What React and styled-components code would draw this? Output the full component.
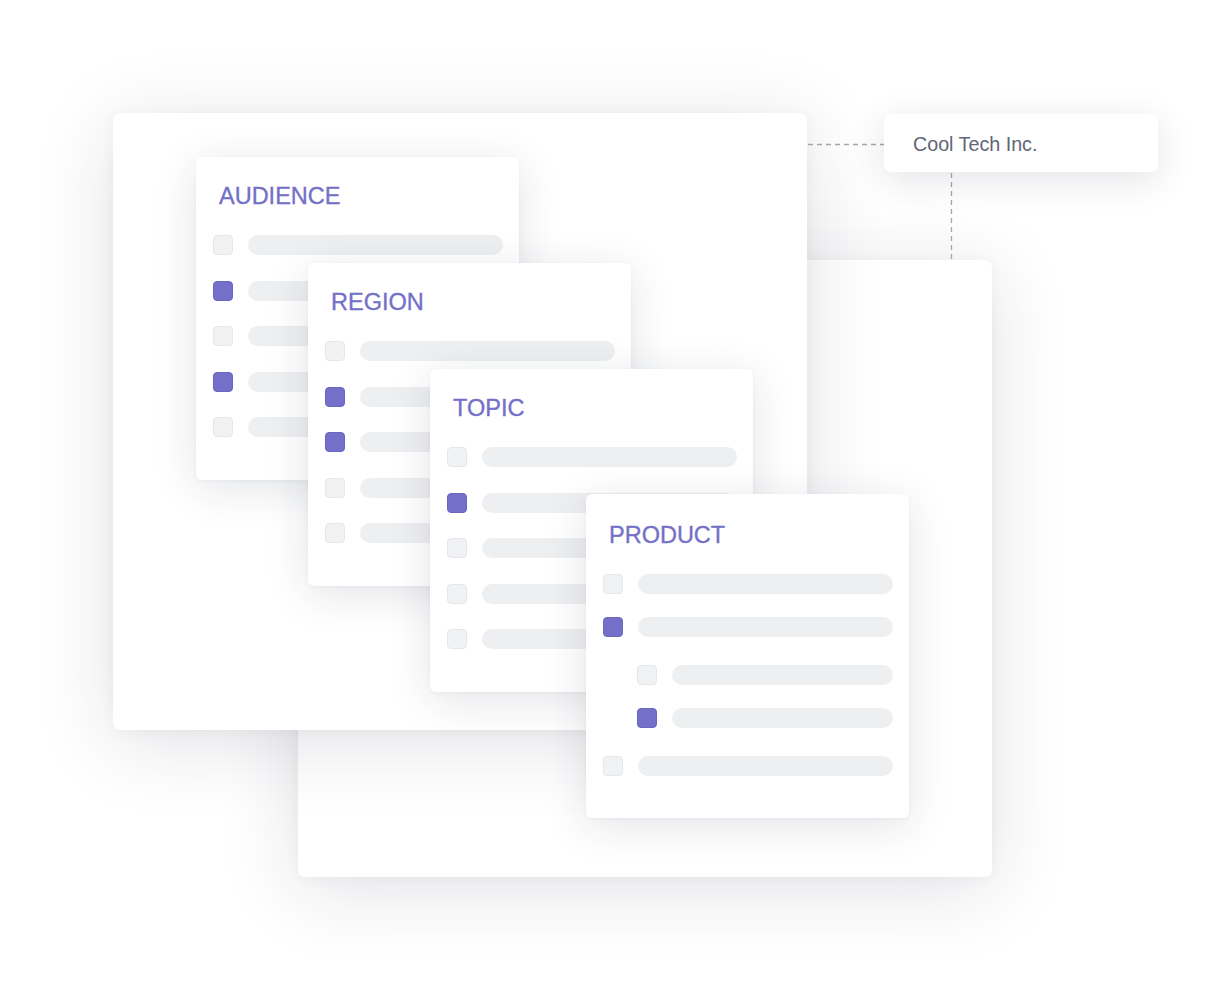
import React from 'react';
import styled, { createGlobalStyle } from 'styled-components';

const GlobalStyle = createGlobalStyle`
  html, body {
    margin: 0;
    padding: 0;
    background: #ffffff;
  }
  body {
    font-family: 'Liberation Sans', Arial, sans-serif;
  }
`;

const filters = [
  {
    title: 'AUDIENCE',
    left: 196,
    top: 157,
    rows: [{}, { checked: true }, {}, { checked: true }, {}],
  },
  {
    title: 'REGION',
    left: 308,
    top: 263,
    rows: [{}, { checked: true }, { checked: true }, {}, {}],
  },
  {
    title: 'TOPIC',
    left: 430,
    top: 369,
    rows: [{}, { checked: true }, {}, {}, {}],
  },
  {
    title: 'PRODUCT',
    left: 586,
    top: 494,
    tight: true,
    rows: [{}, { checked: true }, { sub: true }, { sub: true, checked: true }, {}],
  },
];

const App = () => {
  return (
    <>
      <GlobalStyle />
      <Canvas>
        <Panel left={298} top={260} />
        <Panel left={113} top={113} />

        <Connector width="1211" height="990">
          <line x1="808" y1="144.5" x2="884" y2="144.5" />
          <line x1="951.5" y1="173" x2="951.5" y2="260" />
        </Connector>

        <CompanyTag>Cool Tech Inc.</CompanyTag>

        {filters.map((f) => (
          <FilterCard key={f.title} left={f.left} top={f.top} tight={f.tight}>
            <CardTitle>{f.title}</CardTitle>
            <RowList tight={f.tight}>
              {f.rows.map((r, i) => (
                <Row
                  key={i}
                  sub={r.sub}
                  first={r.sub && !f.rows[i - 1].sub}
                  last={r.sub && !(f.rows[i + 1] || {}).sub}
                >
                  <Check checked={r.checked} />
                  <Bar />
                </Row>
              ))}
            </RowList>
          </FilterCard>
        ))}
      </Canvas>
    </>
  );
};

const Canvas = styled.div`
  position: relative;
  width: 1211px;
  height: 990px;
  overflow: hidden;
  background: #ffffff;
`;

const Panel = styled.div`
  position: absolute;
  left: ${(p) => p.left}px;
  top: ${(p) => p.top}px;
  width: 694px;
  height: 617px;
  background: #ffffff;
  border-radius: 7px;
  box-shadow: 0 12px 80px rgba(28, 32, 60, 0.13), 0 2px 14px rgba(28, 32, 60, 0.04);
`;

const Connector = styled.svg`
  position: absolute;
  left: 0;
  top: 0;
  pointer-events: none;

  line {
    stroke: #a3a6ab;
    stroke-width: 1.3;
    stroke-dasharray: 5 4;
  }
`;

const CompanyTag = styled.div`
  position: absolute;
  left: 884px;
  top: 114px;
  width: 274px;
  height: 58px;
  box-sizing: border-box;
  padding: 3px 0 0 29px;
  display: flex;
  align-items: center;
  background: #ffffff;
  border-radius: 7px;
  box-shadow: 0 8px 36px rgba(28, 32, 60, 0.12);
  font-size: 19.7px;
  color: #5e6677;
`;

const FilterCard = styled.div`
  position: absolute;
  left: ${(p) => p.left}px;
  top: ${(p) => p.top}px;
  width: 323px;
  height: ${(p) => (p.tight ? '324px' : '323px')};
  box-sizing: border-box;
  padding: ${(p) => (p.tight ? '29px' : '27px')} 16px 0 17px;
  display: flex;
  flex-direction: column;
  background: #ffffff;
  border-radius: 6px;
  box-shadow: 0 8px 44px rgba(28, 32, 60, 0.12), 0 1px 5px rgba(28, 32, 60, 0.04);
`;

const CardTitle = styled.h3`
  margin: 0 0 27px 6px;
  font-size: 23.5px;
  line-height: 24px;
  font-weight: 400;
  color: #7470c8;
  -webkit-text-stroke: 0.35px #7470c8;
`;

const RowList = styled.div`
  display: flex;
  flex-direction: column;
  gap: ${(p) => (p.tight ? '23px' : '25.5px')};
`;

const Row = styled.div`
  display: flex;
  align-items: center;
  gap: 15px;
  height: 20px;
  padding-left: ${(p) => (p.sub ? '34px' : '0')};
  margin-top: ${(p) => (p.first ? '5px' : '0')};
  margin-bottom: ${(p) => (p.last ? '5px' : '0')};
`;

const Check = styled.span`
  flex: none;
  width: 20px;
  height: 20px;
  box-sizing: border-box;
  border-radius: 4px;
  background: ${(p) => (p.checked ? '#7470c9' : '#f1f2f4')};
  border: 1px solid ${(p) => (p.checked ? '#6a66c0' : '#e6e7ea')};
`;

const Bar = styled.span`
  flex: 1;
  height: 20px;
  border-radius: 10px;
  background: #eeeff1;
`;

export default App;
